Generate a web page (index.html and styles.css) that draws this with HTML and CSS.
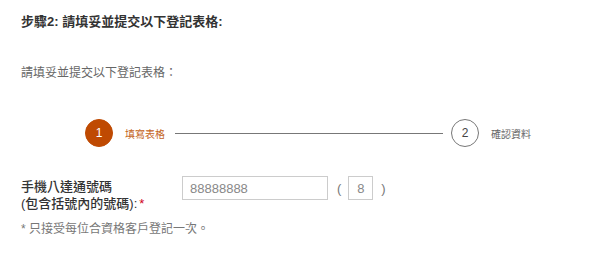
FILE: index.html
```html
<!DOCTYPE html>
<html lang="zh-Hant">
<head>
<meta charset="utf-8">
<link rel="stylesheet" href="styles.css">
</head>
<body>
<div class="page">
  <h1 class="title">步驟2: 請填妥並提交以下登記表格:</h1>
  <p class="intro">請填妥並提交以下登記表格：</p>
  <div class="stepper">
    <span class="step-circle active">1</span>
    <span class="step-label active">填寫表格</span>
    <span class="step-line"></span>
    <span class="step-circle">2</span>
    <span class="step-label">確認資料</span>
  </div>
  <div class="form-row">
    <label class="field-label">手機八達通號碼<br>(包含括號內的號碼):<span class="req">*</span></label>
    <div class="inputs">
      <input class="card-input" type="text" value="88888888">
      <span class="paren">(</span>
      <input class="check-input" type="text" value="8">
      <span class="paren">)</span>
    </div>
  </div>
  <p class="note">* 只接受每位合資格客戶登記一次。</p>
</div>
</body>
</html>
```
FILE: styles.css
```css
html, body {
  margin: 0;
  padding: 0;
  background: #fff;
}
body {
  font-family: "Liberation Sans", "Noto Sans CJK TC", sans-serif;
  color: #333;
}
.page {
  padding: 13px 21px 0;
}
.title {
  margin: 0;
  font-size: 13px;
  line-height: 18px;
  font-weight: bold;
  color: #333;
}
.intro {
  margin: 33px 0 0;
  font-size: 12px;
  line-height: 18px;
  color: #666;
}
.stepper {
  display: flex;
  align-items: center;
  margin-top: 37px;
  padding-left: 64px;
  height: 28px;
}
.step-circle {
  box-sizing: border-box;
  width: 28px;
  height: 28px;
  border-radius: 50%;
  border: 1px solid #777;
  color: #444;
  display: flex;
  align-items: center;
  justify-content: center;
  font-size: 12px;
  flex: none;
}
.step-circle.active {
  background: #bf4a02;
  border-color: #bf4a02;
  color: #fff;
}
.step-label {
  margin-left: 12px;
  font-size: 10px;
  color: #666;
  white-space: nowrap;
}
.step-label.active {
  color: #c4641c;
}
.step-line {
  width: 268px;
  height: 1px;
  background: #777;
  margin: 0 8px 0 10px;
  flex: none;
}
.form-row {
  display: flex;
  align-items: flex-start;
  margin-top: 29px;
}
.field-label {
  width: 161px;
  padding-top: 2px;
  font-size: 13px;
  line-height: 17px;
  font-weight: 500;
  color: #333;
}
.req {
  color: #d0021b;
  margin-left: 2px;
}
.inputs {
  display: flex;
  align-items: center;
}
.card-input, .check-input {
  box-sizing: border-box;
  height: 24px;
  border: 1px solid #ccc;
  font-family: "Liberation Sans", sans-serif;
  font-size: 13px;
  color: #888;
  margin: 0;
  outline: none;
}
.card-input {
  width: 146px;
  padding: 0 7px;
}
.check-input {
  width: 25px;
  padding: 0;
  text-align: center;
}
.paren {
  font-size: 13px;
  color: #777;
  margin: 0 7px 0 9px;
}
.paren:last-child {
  margin: 0 0 0 8px;
}
.note {
  margin: 8px 0 0;
  font-size: 12px;
  line-height: 18px;
  color: #777;
}
```
